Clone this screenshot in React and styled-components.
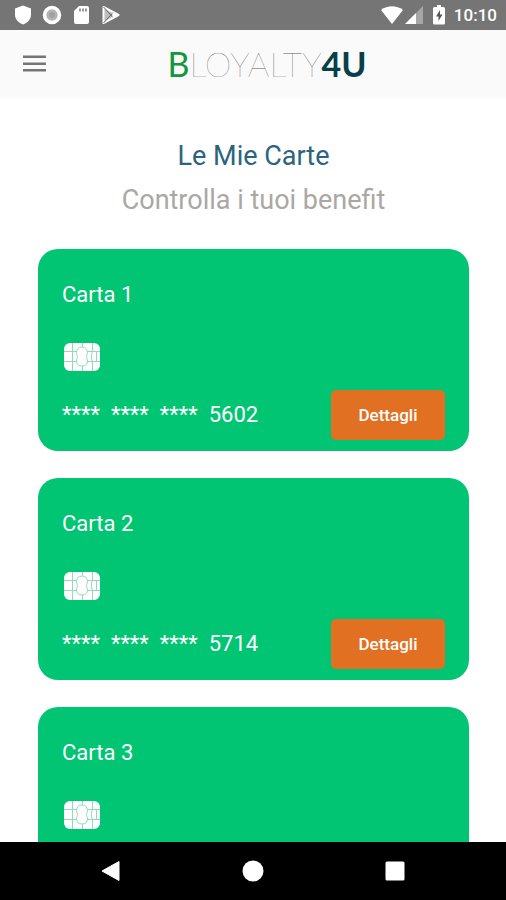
import styled, { createGlobalStyle } from 'styled-components'

const cards = [
    { id: 1, title: 'Carta 1', digits: '5602' },
    { id: 2, title: 'Carta 2', digits: '5714' },
    { id: 3, title: 'Carta 3' },
];

const Chip = () => (
    <ChipIcon viewBox='0 0 36 28' aria-hidden='true'>
        <rect width='36' height='28' rx='6' fill='#fff' />
        <g fill='none' stroke='#8fdcb9' strokeWidth='1'>
            <path d='M0 8.5H12.5M0 18.5H12.5M23.5 8.5H36M23.5 18.5H36M8.5 0V28M28.5 0V8.5M28.5 18.5V28M18.5 0V4M18.5 23V28' />
            <path d='M18 4C14.5 4 12.5 6.5 12.5 9.5C12.5 11.5 13.5 12.5 13.5 13.5C13.5 14.5 12.5 16 12.5 18C12.5 21 14.5 23 18 23C21.5 23 23.5 21 23.5 18C23.5 16 22.5 14.5 22.5 13.5C22.5 12.5 23.5 11.5 23.5 9.5C23.5 6.5 21.5 4 18 4Z' />
            <path d='M28.5 8.5C27 11 27 16 28.5 18.5M32.5 8.5V18.5' />
        </g>
    </ChipIcon>
);

const StatusBar = () => (
    <Status>
        <StatusGroup $gap={9}>
            <svg width='20' height='20' viewBox='0 0 20 20' fill='#fff'>
                <path d='M10 0.5L18 3.5V9.5C18 14 15 17.5 10 19.5C5 17.5 2 14 2 9.5V3.5Z' />
            </svg>
            <svg width='20' height='20' viewBox='0 0 20 20'>
                <circle cx='10' cy='10' r='7.5' fill='#b4b4b4' stroke='#fff' strokeWidth='3.5' />
                <circle cx='10' cy='10' r='3' fill='#a2a2a2' />
            </svg>
            <svg width='20' height='20' viewBox='0 0 20 20'>
                <path d='M8 1H16Q18 1 18 3V17Q18 19 16 19H5Q3 19 3 17V6Z' fill='#fff' />
                <path d='M9 3.5V6.5M12 3.5V6.5M15 3.5V6.5' stroke='#777' strokeWidth='1.5' />
            </svg>
            <svg width='20' height='20' viewBox='0 0 20 20' fill='none'>
                <path d='M3.5 2L18.5 10L3.5 18Z' fill='#bdbdbd' stroke='#fff' strokeWidth='2' strokeLinejoin='round' />
                <path d='M3.5 2L13.5 13M3.5 18L13.5 7' stroke='#666' strokeWidth='1' />
                <path d='M12.5 7L18.5 10L12.5 13.5Z' fill='#fff' />
            </svg>
        </StatusGroup>
        <StatusGroup $gap={2}>
            <svg width='22' height='18' viewBox='0 0 22 18' fill='#fff'>
                <path d='M0 4C6.5 -1 15.5 -1 22 4L11 18Z' />
            </svg>
            <svg width='18' height='18' viewBox='0 0 18 18'>
                <path d='M18 0V18H0Z' fill='#a6a6a6' />
                <path d='M11 7V18H0Z' fill='#fff' />
            </svg>
            <BatteryIcon width='12' height='20' viewBox='0 0 12 20'>
                <path d='M4 0H8V2H10.5Q12 2 12 3.5V18Q12 19.5 10.5 19.5H1.5Q0 19.5 0 18V3.5Q0 2 1.5 2H4Z' fill='#fff' />
                <path d='M7 5L3 11.5H5.5V16L9.5 9.5H7Z' fill='#555' />
            </BatteryIcon>
            <Clock>10:10</Clock>
        </StatusGroup>
    </Status>
);

const Card = ({ title, digits }) => (
    <CardBox>
        <CardTitle>{title}</CardTitle>
        <Chip />
        {digits && (
            <CardFooter>
                <CardNumber>
                    <span>****</span>
                    <span>****</span>
                    <span>****</span>
                    <span>{digits}</span>
                </CardNumber>
                <DetailsButton type='button'>Dettagli</DetailsButton>
            </CardFooter>
        )}
    </CardBox>
);

const App = () => {
    return (
        <Screen>
            <GlobalStyle />
            <StatusBar />
            <Header>
                <MenuButton type='button' aria-label='Menu'>
                    <svg width='24' height='18' viewBox='0 0 24 18' fill='#757575'>
                        <rect y='0.5' width='23' height='2.5' />
                        <rect y='7.5' width='23' height='2.5' />
                        <rect y='14' width='23' height='2.5' />
                    </svg>
                </MenuButton>
                <Logo>
                    <LogoPart $color='#14963c' $weight={400}>B</LogoPart>
                    <LogoPart $color='#5c5c5c' $weight={100}>LOYALTY</LogoPart>
                    <LogoPart $color='#083f4b' $weight={700}>4U</LogoPart>
                </Logo>
            </Header>
            <Main>
                <Title>Le Mie Carte</Title>
                <Subtitle>Controlla i tuoi benefit</Subtitle>
                <CardList>
                    {cards.map((card) => (
                        <Card key={card.id} title={card.title} digits={card.digits} />
                    ))}
                </CardList>
            </Main>
            <NavBar>
                <NavButton type='button' aria-label='Indietro'>
                    <svg width='22' height='22' viewBox='0 0 22 22' fill='#fff'>
                        <path d='M19 1.5V20.5L2 11Z' stroke='#fff' strokeWidth='1' strokeLinejoin='round' />
                    </svg>
                </NavButton>
                <NavButton type='button' aria-label='Home'>
                    <svg width='22' height='22' viewBox='0 0 22 22' fill='#fff'>
                        <circle cx='11' cy='11' r='10.5' />
                    </svg>
                </NavButton>
                <NavButton type='button' aria-label='Recenti'>
                    <svg width='22' height='22' viewBox='0 0 22 22' fill='#fff'>
                        <rect x='1.5' y='1.5' width='19' height='19' rx='1.5' />
                    </svg>
                </NavButton>
            </NavBar>
        </Screen>
    );
}

export default App;

const GlobalStyle = createGlobalStyle`
    * {
        box-sizing: border-box;
    }

    body {
        margin: 0;
        background-color: #fff;
        font-family: Roboto, sans-serif;
    }

    h1, h2, p {
        margin: 0;
        font-weight: 400;
    }

    button {
        border: 0;
        padding: 0;
        font-family: inherit;
        cursor: pointer;
    }

    svg {
        display: block;
    }
`;

const Screen = styled.div`
    display: flex;
    flex-direction: column;
    height: 100vh;
    overflow: hidden;
`;

const Status = styled.header`
    display: flex;
    flex: none;
    align-items: center;
    justify-content: space-between;
    height: 30px;
    padding: 0 9px 0 13px;
    background-color: #757575;
`;

const StatusGroup = styled.div`
    display: flex;
    align-items: center;
    gap: ${({ $gap }) => $gap}px;
`;

const BatteryIcon = styled.svg`
    margin: 0 7px 0 8px;
`;

const Clock = styled.span`
    color: #fff;
    font-size: 17px;
    font-weight: 500;
    line-height: 30px;
`;

const Header = styled.div`
    display: grid;
    flex: none;
    grid-template-columns: 24px 1fr 24px;
    align-items: center;
    height: 68px;
    padding: 0 23px;
    background-color: #fafafa;
`;

const MenuButton = styled.button`
    background: none;
`;

const Logo = styled.div`
    display: flex;
    justify-content: center;
    padding-left: 28px;
    font-family: Lato, sans-serif;
    font-size: 34px;
    line-height: 44px;
`;

const LogoPart = styled.span`
    color: ${({ $color }) => $color};
    font-weight: ${({ $weight }) => $weight};
`;

const Main = styled.main`
    flex: 1;
    min-height: 0;
    overflow: hidden;
    padding: 36px 37px 0 38px;
    text-align: center;
`;

const Title = styled.h1`
    color: #2b6480;
    font-size: 27px;
    line-height: 44px;
`;

const Subtitle = styled.p`
    color: #aba8a3;
    font-size: 27px;
    line-height: 44px;
`;

const CardList = styled.div`
    display: flex;
    flex-direction: column;
    gap: 27px;
    margin-top: 27px;
`;

const CardBox = styled.section`
    min-height: 202px;
    padding: 30px 24px 11px;
    border-radius: 20px;
    background-color: #02c574;
    color: #fff;
    text-align: left;
`;

const CardTitle = styled.h2`
    font-size: 22px;
    line-height: 32px;
`;

const ChipIcon = styled.svg`
    width: 36px;
    height: 28px;
    margin: 32px 0 19px 2px;
`;

const CardFooter = styled.div`
    display: flex;
    align-items: center;
    justify-content: space-between;
`;

const CardNumber = styled.p`
    display: flex;
    gap: 11px;
    font-size: 22px;
    line-height: 32px;
`;

const DetailsButton = styled.button`
    width: 114px;
    height: 50px;
    border-radius: 5px;
    background-color: #e17022;
    color: #fff;
    font-size: 17px;
    font-weight: 500;
`;

const NavBar = styled.nav`
    display: flex;
    flex: none;
    align-items: center;
    justify-content: center;
    gap: 120px;
    height: 58px;
    background-color: #000;
`;

const NavButton = styled.button`
    background: none;
`;
